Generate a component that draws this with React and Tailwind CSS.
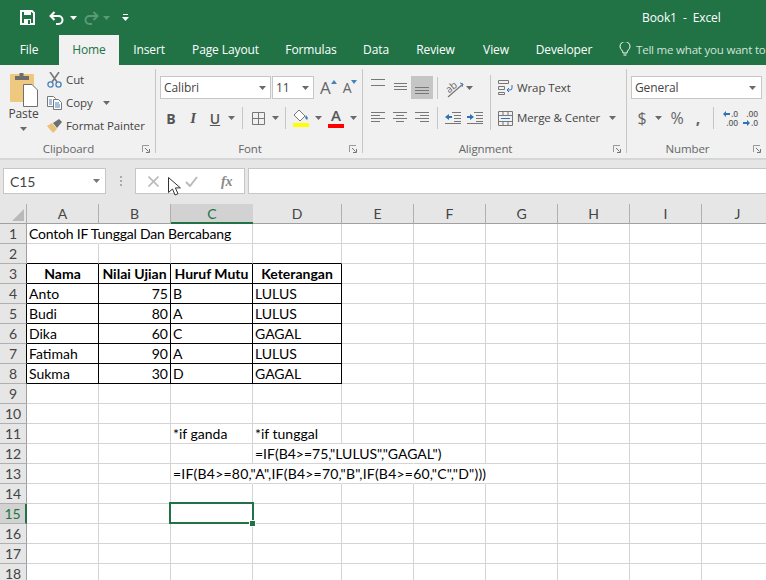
import React from "react";

const tabs = [
  { label: "File", cls: "ml-[4px] w-[50px]" },
  { label: "Home", cls: "ml-[5px] w-[60px] bg-[#f1f1f1] text-[#217346]" },
  { label: "Insert", cls: "w-[60px]" },
  { label: "Page Layout", cls: "w-[93px]" },
  { label: "Formulas", cls: "w-[78px]" },
  { label: "Data", cls: "w-[52px]" },
  { label: "Review", cls: "w-[67px]" },
  { label: "View", cls: "w-[54px]" },
  { label: "Developer", cls: "w-[82px]" },
];

const columns = ["A", "B", "C", "D", "E", "F", "G", "H", "I", "J"];
const rowNumbers = Array.from({ length: 18 }, (_, i) => i + 1);

// cell contents, everything else on the sheet is empty
const cells = {
  A1: { text: "Contoh IF Tunggal Dan Bercabang", cls: "z-10 tracking-[-0.2px]" },
  A3: { text: "Nama", bold: true, align: "center" },
  B3: { text: "Nilai Ujian", bold: true, align: "center" },
  C3: { text: "Huruf Mutu", bold: true, align: "center" },
  D3: { text: "Keterangan", bold: true, align: "center" },
  A4: { text: "Anto" }, B4: { text: "75", align: "right" }, C4: { text: "B" }, D4: { text: "LULUS" },
  A5: { text: "Budi" }, B5: { text: "80", align: "right" }, C5: { text: "A" }, D5: { text: "LULUS" },
  A6: { text: "Dika" }, B6: { text: "60", align: "right" }, C6: { text: "C" }, D6: { text: "GAGAL" },
  A7: { text: "Fatimah" }, B7: { text: "90", align: "right" }, C7: { text: "A" }, D7: { text: "LULUS" },
  A8: { text: "Sukma" }, B8: { text: "30", align: "right" }, C8: { text: "D" }, D8: { text: "GAGAL" },
  C11: { text: "*if ganda" },
  D11: { text: "*if tunggal" },
  D12: { text: '=IF(B4>=75,"LULUS","GAGAL")', cls: "z-10" },
  C13: { text: '=IF(B4>=80,"A",IF(B4>=70,"B",IF(B4>=60,"C","D")))', cls: "z-10 tracking-[0.22px]" },
};

// long text runs over these cells, so Excel drops their right gridline
const overflowed = ["A1", "B1", "D12", "E12", "C13", "D13", "E13", "F13"];

function Caret({ className = "", color = "#6a6a6a" }) {
  return (
    <svg width="7" height="4" viewBox="0 0 7 4" className={`shrink-0 ${className}`}>
      <path d="M0 0h7L3.5 4z" fill={color} />
    </svg>
  );
}

function Lines({ rows, width = 14 }) {
  // rows: [x1, x2] in a 14 wide box, one line every 3px
  return (
    <svg width={width} height={rows.length * 3} viewBox={`0 0 ${width} ${rows.length * 3}`}>
      {rows.map(([a, b], i) => (
        <rect key={i} x={a} y={i * 3} width={b - a} height="1" fill="#777" />
      ))}
    </svg>
  );
}

function Launcher() {
  return (
    <svg width="9" height="9" viewBox="0 0 9 9" className="absolute right-[4px] bottom-[3px]">
      <path d="M.5 7V.5H7" fill="none" stroke="#999" />
      <path d="M3 3l3.5 3.5M7.5 4v3.5H4" fill="none" stroke="#777" />
    </svg>
  );
}

function GroupLabel({ title }) {
  return (
    <div className="relative h-[16px] shrink-0 pr-[18px] text-center text-[11.5px] leading-[16px] text-[#666]">
      {title}
      <Launcher />
    </div>
  );
}

function Group({ title, className, children }) {
  return (
    <div className={`flex h-[84px] flex-col border-r border-[#c6c6c6] ${className}`}>
      <div className="h-[72px] shrink-0">{children}</div>
      <GroupLabel title={title} />
    </div>
  );
}

function Btn({ className = "", children }) {
  return <div className={`flex h-[22px] shrink-0 items-center justify-center ${className}`}>{children}</div>;
}

function Sep({ className = "" }) {
  return <div className={`h-[22px] w-px shrink-0 bg-[#c6c6c6] ${className}`} />;
}

function Combo({ className, caret, children }) {
  return (
    <div className={`flex h-[23px] shrink-0 items-center justify-between border border-[#c6c6c6] bg-white pl-[3px] text-[12px] text-[#444] ${className}`}>
      {children}
      <Caret className={caret} />
    </div>
  );
}

function QuickAccess() {
  return (
    <div className="flex h-[35px] items-center text-white">
      <svg width="15" height="15" viewBox="0 0 15 15" className="ml-[20px] shrink-0">
        <path d="M1 1h11l2 2v11H1z" fill="none" stroke="#fff" strokeWidth="2" />
        <rect x="4" y="1" width="7" height="4" fill="#fff" />
        <rect x="4" y="9" width="7" height="5" fill="#fff" />
        <rect x="8" y="10" width="2" height="4" fill="#217346" />
      </svg>
      <svg width="16" height="14" viewBox="0 0 16 14" className="ml-[14px] shrink-0">
        <path d="M5.5 1L1.5 5l4 4M2 5h7.5a4 4 0 0 1 0 8H7" fill="none" stroke="#fff" strokeWidth="2" />
      </svg>
      <Caret className="ml-[5px]" color="#fff" />
      <svg width="16" height="14" viewBox="0 0 16 14" className="ml-[6px] shrink-0">
        <path d="M10.5 1l4 4-4 4M14 5H6.5a4 4 0 0 0 0 8H9" fill="none" stroke="#5a9a78" strokeWidth="2" />
      </svg>
      <Caret className="ml-[4px]" color="#5a9a78" />
      <svg width="7" height="7" viewBox="0 0 7 7" className="ml-[12px] shrink-0">
        <path d="M1 0h5v1H1zM0 3h7L3.5 7z" fill="#fff" />
      </svg>
      <span className="ml-[513px] text-[12px] whitespace-nowrap">Book1&nbsp; -&nbsp; Excel</span>
    </div>
  );
}

function ClipboardGroup() {
  return (
    <Group title="Clipboard" className="w-[156px]">
      <div className="flex">
        <div className="flex w-[47px] flex-col items-center pt-[3px]">
          <svg width="29" height="36" viewBox="0 0 29 36" className="-ml-[1px]">
            <rect x="1" y="2" width="24" height="28" rx="1" fill="#eec87e" />
            <path d="M6 8V4h4.5V1h4v3H20v4z" fill="#6d6d6d" />
            <path d="M14.5 12.5H23l5.5 5.5v16.5h-14z" fill="#fff" stroke="#707070" />
          </svg>
          <div className="-mt-[2px] text-[12px] leading-[16px] text-[#444]">Paste</div>
          <Caret className="mt-[5px]" />
        </div>
        <div className="-mt-[1px] flex flex-col text-[11.5px] whitespace-nowrap text-[#444]">
          <div className="flex h-[23px] items-center">
            <svg width="15" height="16" viewBox="0 0 15 16" className="mr-[4px]">
              <path d="M3 0l7 10M12 0L5 10" stroke="#777" strokeWidth="1.6" fill="none" />
              <circle cx="3.5" cy="12.5" r="2.6" fill="none" stroke="#4a80b8" strokeWidth="1.3" />
              <circle cx="11.5" cy="12.5" r="2.6" fill="none" stroke="#4a80b8" strokeWidth="1.3" />
            </svg>
            Cut
          </div>
          <div className="flex h-[23px] items-center">
            <svg width="15" height="14" viewBox="0 0 15 14" className="mr-[4px]">
              <path d="M.5.5h6l2 2v8h-8z" fill="#fff" stroke="#777" />
              <path d="M6.5 3.5h5l3 3v7h-8z" fill="#fff" stroke="#777" />
              <path d="M2 4h3M2 6h3M2 8h3M8 7h4M8 9h5M8 11h5" stroke="#4a80b8" />
            </svg>
            Copy
            <Caret className="ml-[10px]" />
          </div>
          <div className="flex h-[23px] items-center">
            <svg width="15" height="14" viewBox="0 0 15 14" className="mr-[4px]">
              <path d="M0 7l5-3 5 6-4 4C4 12 2 9 0 7z" fill="#e9c17a" />
              <path d="M6 4l6-4 3 3-5 6z" fill="#6f6f6f" />
            </svg>
            Format Painter
          </div>
        </div>
      </div>
    </Group>
  );
}

function FontGroup() {
  return (
    <Group title="Font" className="w-[207px]">
      <div className="flex pt-[7px] pl-[4px]">
        <Combo className="w-[111px] pr-[4px]">Calibri</Combo>
        <Combo className="ml-px w-[42px] pr-[4px]">11</Combo>
        <div className="ml-[6px] flex h-[23px] items-center text-[#666]">
          <span className="text-[17px] leading-none">A</span>
          <svg width="6" height="4" viewBox="0 0 6 4" className="mb-[11px]"><path d="M0 4h6L3 0z" fill="#4a80b8" /></svg>
          <span className="ml-[6px] text-[14px] leading-none">A</span>
          <svg width="6" height="4" viewBox="0 0 6 4" className="mb-[11px]"><path d="M0 0h6L3 4z" fill="#4a80b8" /></svg>
        </div>
      </div>
      <div className="mt-[8px] flex items-center pl-[4px] text-[#555]">
        <Btn className="w-[22px] text-[14px] font-bold">B</Btn>
        <Btn className="w-[22px] font-['Liberation_Serif',serif] text-[15px] font-bold italic">I</Btn>
        <Btn className="w-[22px] text-[14px] font-semibold underline">U</Btn>
        <Btn className="w-[11px]"><Caret /></Btn>
        <Sep className="ml-[5px]" />
        <Btn className="ml-[9px] w-[13px]">
          <svg width="13" height="13" viewBox="0 0 13 13">
            <path d="M.5.5h12v12H.5zM6.5.5v12M.5 6.5h12" fill="none" stroke="#777" />
          </svg>
        </Btn>
        <Btn className="ml-[7px] w-[7px]"><Caret /></Btn>
        <Sep className="ml-[6px]" />
        <Btn className="ml-[7px] w-[16px]">
          <svg width="16" height="18" viewBox="0 0 16 18">
            <path d="M6 1l6 6-5 5-6-6z" fill="#fff" stroke="#777" />
            <path d="M13 6l2 3-1 2-2-2z" fill="#4a80b8" />
            <rect y="14" width="16" height="4" fill="#ffff00" />
          </svg>
        </Btn>
        <Btn className="ml-[6px] w-[7px]"><Caret /></Btn>
        <div className="ml-[6px] flex h-[22px] w-[16px] flex-col items-center">
          <span className="text-[15px] leading-[16px] font-semibold">A</span>
          <div className="mt-px h-[4px] w-[16px] bg-[#ff0000]" />
        </div>
        <Btn className="ml-[6px] w-[7px]"><Caret /></Btn>
      </div>
    </Group>
  );
}

function AlignmentGroup() {
  return (
    <Group title="Alignment" className="w-[264px]">
      <div className="flex pl-[4px]">
        <div className="flex w-[123px] flex-col pt-[7px]">
          <div className="flex items-center">
            <div className="flex h-[23px] w-[22px] items-start justify-center pt-[3px]">
              <Lines rows={[[0, 14], [0, 0], [0, 14]]} />
            </div>
            <div className="flex h-[23px] w-[22px] items-center justify-center">
              <Lines rows={[[1, 14], [1, 14], [1, 14]]} />
            </div>
            <div className="flex h-[23px] w-[22px] items-end justify-center bg-[#c5c5c5] pb-[3px]">
              <Lines rows={[[0, 14], [0, 14], [0, 14]]} />
            </div>
            <Sep className="ml-[4px]" />
            <svg width="20" height="20" viewBox="0 0 20 20" className="ml-[7px] overflow-visible">
              <path d="M3 19L18 6" stroke="#777" strokeWidth="1.2" />
              <path d="M15 5l3 1-1 3" stroke="#4a80b8" fill="none" />
              <text x="1" y="13" fontSize="10" fill="#666" transform="rotate(-40 6 10)">ab</text>
            </svg>
            <Caret className="ml-[1px]" />
          </div>
          <div className="mt-[8px] flex items-center">
            <Btn className="w-[22px]"><Lines rows={[[0, 14], [0, 9], [0, 14], [0, 9]]} /></Btn>
            <Btn className="w-[22px]"><Lines rows={[[0, 14], [3, 11], [0, 14], [3, 11]]} /></Btn>
            <Btn className="w-[22px]"><Lines rows={[[0, 14], [5, 14], [0, 14], [5, 14]]} /></Btn>
            <Sep className="ml-[4px]" />
            <svg width="16" height="12" viewBox="0 0 16 12" className="ml-[7px]">
              <path d="M7 .5h9M9 3.5h7M9 6.5h7M9 9.5h7M0 11.5h16" stroke="#777" />
              <path d="M0 5l4-3v2h3v2H4v2z" fill="#2f72b5" />
            </svg>
            <svg width="16" height="12" viewBox="0 0 16 12" className="ml-[6px]">
              <path d="M7 .5h9M9 3.5h7M9 6.5h7M9 9.5h7M0 11.5h16" stroke="#777" />
              <path d="M7 5L3 2v2H0v2h3v2z" fill="#2f72b5" />
            </svg>
          </div>
        </div>
        <div className="mt-[6px] h-[55px] w-px bg-[#c6c6c6]" />
        <div className="flex flex-col pt-[7px] pl-[7px] text-[11.5px] whitespace-nowrap text-[#444]">
          <div className="flex h-[23px] items-center">
            <svg width="15" height="15" viewBox="0 0 15 15" className="mr-[4px]">
              <path d="M.5.5h10v3H.5zM.5 6.5h6v3h-6zM.5 12.5h6v2h-6z" fill="none" stroke="#777" />
              <path d="M14 5v3a2 2 0 0 1-2 2H9M11 8l-2 2 2 2" fill="none" stroke="#2f72b5" />
            </svg>
            Wrap Text
          </div>
          <div className="mt-[8px] flex h-[22px] items-center">
            <svg width="15" height="15" viewBox="0 0 15 15" className="mr-[4px]">
              <path d="M.5.5h14v14H.5zM.5 4.5h14M.5 10.5h14M5 .5v4M10 .5v4M5 10.5v4M10 10.5v4" fill="none" stroke="#777" />
              <path d="M3 7.5h9" stroke="#2f72b5" />
            </svg>
            Merge &amp; Center
            <Caret className="ml-[9px]" />
          </div>
        </div>
      </div>
    </Group>
  );
}

function NumberGroup() {
  return (
    <div className="flex h-[84px] w-[139px] flex-col">
      <div className="h-[72px] shrink-0">
        <div className="pt-[7px] pl-[4px]">
          <Combo className="w-[131px] pr-[5px]">General</Combo>
        </div>
        <div className="mt-[8px] flex items-center pl-[10px] text-[#666]">
          <Btn className="w-[10px] text-[16px]">$</Btn>
          <Caret className="ml-[8px]" />
          <Btn className="ml-[7px] w-[16px] text-[16px]">%</Btn>
          <Btn className="ml-[9px] w-[8px] text-[16px] font-bold">,</Btn>
          <Sep className="ml-[11px]" />
          <div className="ml-[7px] flex w-[17px] flex-col items-end text-[8.5px] leading-[9px] font-semibold">
            <div className="flex items-center">
              <svg width="7" height="6" viewBox="0 0 7 6" className="mr-px"><path d="M0 3l3-3v2h4v2H3v2z" fill="#2f72b5" /></svg>
              .0
            </div>
            <div>.00</div>
          </div>
          <div className="ml-[5px] flex w-[15px] flex-col items-end text-[8.5px] leading-[9px] font-semibold">
            <div>.00</div>
            <div className="flex items-center">
              <svg width="7" height="6" viewBox="0 0 7 6" className="mr-px"><path d="M7 3L4 0v2H0v2h4v2z" fill="#2f72b5" /></svg>
              .0
            </div>
          </div>
        </div>
      </div>
      <GroupLabel title="Number" />
    </div>
  );
}

function FormulaBar() {
  return (
    <div className="flex h-[44px] items-start bg-[#e6e6e6] pt-[8px] pl-[3px]">
      <div className="flex h-[26px] w-[103px] items-center justify-between border border-[#c6c6c6] bg-white pr-[5px] pl-[6px] font-['Lato',sans-serif] text-[14px] text-[#444]">
        C15
        <Caret color="#777" />
      </div>
      <div className="ml-[14px] flex w-[3px] flex-col gap-[2px] pt-[8px]">
        <div className="h-[2px] w-[2px] bg-[#aaa]" />
        <div className="h-[2px] w-[2px] bg-[#aaa]" />
        <div className="h-[2px] w-[2px] bg-[#aaa]" />
      </div>
      <div className="relative ml-[12px] flex h-[26px] w-[110px] items-center border border-[#c6c6c6] bg-white">
        <svg width="11" height="11" viewBox="0 0 11 11" className="ml-[12px]">
          <path d="M.5.5l10 10M10.5.5l-10 10" stroke="#bbb" strokeWidth="1.6" />
        </svg>
        <svg width="13" height="11" viewBox="0 0 13 11" className="ml-[26px]">
          <path d="M1 6l4 4 7-9" fill="none" stroke="#bbb" strokeWidth="2" />
        </svg>
        <span className="ml-[23px] font-['Liberation_Serif',serif] text-[14px] font-bold text-[#888] italic">fx</span>
        {/* mouse pointer sits over the buttons */}
        <svg width="13" height="20" viewBox="0 0 13 20" className="absolute top-[8px] left-[32px]">
          <path d="M.5.5v15l4-3.5 2.5 6 3-1.3-2.6-5.8h5z" fill="#fff" stroke="#333" />
        </svg>
      </div>
      <div className="ml-[3px] h-[26px] flex-1 border-y border-l border-[#c6c6c6] bg-white" />
    </div>
  );
}

function Sheet() {
  return (
    <div className="grid grid-cols-[27px_72px_72px_82px_89px_72px_72px_72px_72px_72px_72px] grid-rows-[repeat(19,20px)] font-['Lato',sans-serif] text-[14px] tracking-normal text-black">
      {/* corner */}
      <div className="flex items-end justify-end border-r border-b border-r-[#b0b0b0] border-b-[#a0a0a0] bg-[#e6e6e6] pr-[2px] pb-[2px]">
        <svg width="12" height="12" viewBox="0 0 12 12"><path d="M12 0v12H0z" fill="#b9b9b9" /></svg>
      </div>
      {columns.map((c) => (
        <div
          key={c}
          className={
            c === "C"
              ? "flex items-center justify-center border-b-2 border-b-[#217346] bg-[#d2d2d2] text-[#217346]"
              : "flex items-center justify-center border-r border-b border-r-[#b0b0b0] border-b-[#a0a0a0] bg-[#e6e6e6] text-[#444]"
          }
        >
          {c}
        </div>
      ))}
      {rowNumbers.map((r) => (
        <React.Fragment key={r}>
          <div
            className={
              r === 15
                ? "flex items-center justify-center border-r-2 border-b border-r-[#217346] border-b-[#b0b0b0] bg-[#d2d2d2] text-[#217346]"
                : r >= 3 && r <= 8
                  ? "flex items-center justify-center border-r border-b border-r-black border-b-[#b0b0b0] bg-[#e6e6e6] text-[#444]"
                  : "flex items-center justify-center border-r border-b border-r-[#a0a0a0] border-b-[#b0b0b0] bg-[#e6e6e6] text-[#444]"
            }
          >
            {r}
          </div>
          {columns.map((c) => {
            const id = `${c}${r}`;
            const cell = cells[id];
            const inTable = "ABCD".includes(c);
            let border = "border-r-[#d4d4d4] border-b-[#d4d4d4]";
            if (inTable && r >= 3 && r <= 8) border = "border-r-black border-b-black";
            else if (inTable && r === 2) border = "border-r-[#d4d4d4] border-b-black";
            else if (overflowed.includes(id)) border = "border-r-white border-b-[#d4d4d4]";
            const align =
              cell?.align === "right" ? "justify-end pr-[2px]" : cell?.align === "center" ? "justify-center" : "justify-start pl-[2px]";
            return (
              <div key={id} className={`relative flex items-center border-r border-b whitespace-nowrap ${border} ${align} ${cell?.bold ? "font-bold" : ""} ${cell?.cls || ""}`}>
                {cell?.text}
                {id === "C15" && (
                  <>
                    <div className="absolute -top-[2px] -left-[2px] z-10 h-[22px] w-[85px] border-2 border-[#217346]" />
                    <div className="absolute top-[16px] left-[78px] z-10 h-[7px] w-[7px] border border-white bg-[#217346]" />
                  </>
                )}
              </div>
            );
          })}
        </React.Fragment>
      ))}
    </div>
  );
}

export default function App() {
  return (
    <div className="h-[580px] w-[766px] overflow-hidden bg-white font-['Open_Sans',sans-serif] tracking-[-0.1px]">
      <div className="h-[65px] overflow-hidden bg-[#217346] text-white">
        <QuickAccess />
        <div className="flex h-[30px] text-[12px]">
          {tabs.map((t) => (
            <div key={t.label} className={`flex shrink-0 items-center justify-center ${t.cls}`}>
              {t.label}
            </div>
          ))}
          <svg width="12" height="15" viewBox="0 0 12 15" className="mt-[7px] ml-[14px] shrink-0">
            <path d="M4 11C4 8 1 7.5 1 4.5a5 5 0 0 1 10 0C11 7.5 8 8 8 11zM4.5 13h3" fill="none" stroke="#fff" />
          </svg>
          <span className="ml-[5px] self-center text-[11.5px] tracking-[-0.2px] whitespace-nowrap text-[#d3e3da]">Tell me what you want to</span>
        </div>
      </div>
      <div className="flex h-[95px] border-b-2 border-[#d6d6d6] bg-[#f1f1f1] pt-[4px]">
        <ClipboardGroup />
        <FontGroup />
        <AlignmentGroup />
        <NumberGroup />
      </div>
      <FormulaBar />
      <Sheet />
    </div>
  );
}
